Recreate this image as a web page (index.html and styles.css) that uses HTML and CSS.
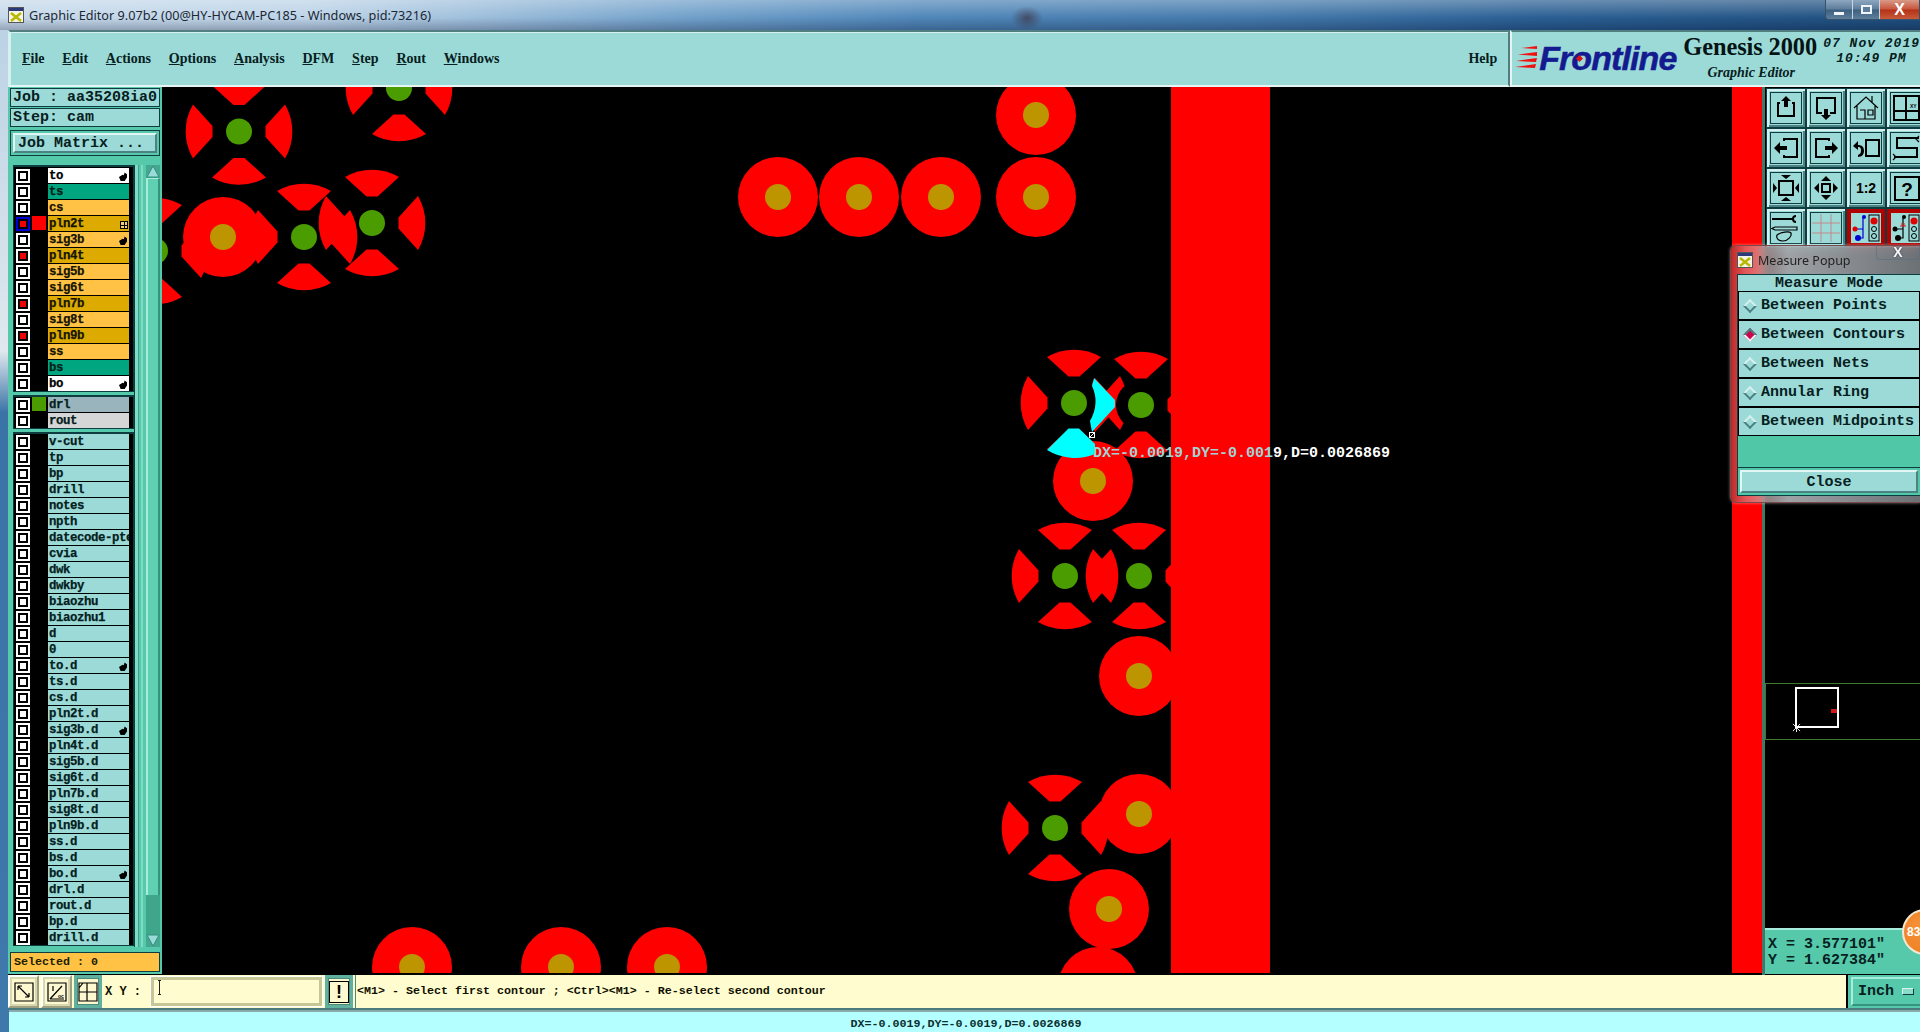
FILE: index.html
```html
<!DOCTYPE html>
<html lang="en">
<head>
<meta charset="utf-8">
<title>Graphic Editor</title>
<link rel="stylesheet" href="styles.css">
</head>
<body>
<div class="app">
  <header class="titlebar">
    <svg class="appicon" viewBox="0 0 16 16"><rect x=".5" y=".5" width="15" height="15" fill="#f4f4e8" stroke="#555"/><rect x="1" y="1" width="14" height="3" fill="#2a3a7a"/><path d="M3 6l10 8M13 6L3 14" stroke="#b8b800" stroke-width="2.4"/></svg>
    <span class="titletext">Graphic Editor 9.07b2 (00@HY-HYCAM-PC185 - Windows, pid:73216)</span>
    <div class="winbtns">
      <span class="wb wb-min"><i></i></span>
      <span class="wb wb-max"><i></i></span>
      <span class="wb wb-close">X</span>
    </div>
  </header>

  <div class="menurow">
    <nav class="menubar">
      <span class="mi"><u>F</u>ile</span>
      <span class="mi"><u>E</u>dit</span>
      <span class="mi"><u>A</u>ctions</span>
      <span class="mi"><u>O</u>ptions</span>
      <span class="mi"><u>A</u>nalysis</span>
      <span class="mi"><u>D</u>FM</span>
      <span class="mi"><u>S</u>tep</span>
      <span class="mi"><u>R</u>out</span>
      <span class="mi"><u>W</u>indows</span>
      <span class="mi mi-help">Help</span>
    </nav>
    <div class="brand">
      <div class="logo">
        <svg class="speed" viewBox="0 0 22 24"><path d="M22 1L6 3l16 1zM22 7L3 9.500l19 1.500zM22 13L1 16l20 1zM21 19L0 22l20 1z" fill="#f01010"/></svg>
        <span class="logotext">Frontline</span>
        <i class="logodot"></i>
      </div>
      <div class="genesis">
        <span class="gname">Genesis 2000</span>
        <span class="gsub">Graphic Editor</span>
      </div>
      <div class="clock">
        <span>07 Nov 2019</span>
        <span class="clock-time">10:49 PM</span>
      </div>
    </div>
  </div>

  <main class="main">
    <aside class="left">
      <div class="infobox">Job : aa35208ia0</div>
      <div class="infobox">Step: cam</div>
      <div class="matrixwrap"><div class="matrixbtn">Job Matrix ...</div></div>
      <div class="listarea">
        <div class="lists">
          <div class="group">
            <div class="row"><i class="chk"></i><i class="sw"></i><span class="name n-white hand">to</span></div>
            <div class="row"><i class="chk"></i><i class="sw"></i><span class="name n-green">ts</span></div>
            <div class="row"><i class="chk"></i><i class="sw"></i><span class="name n-orange">cs</span></div>
            <div class="row"><i class="chk chk-work"></i><i class="sw sw-red"></i><span class="name n-gold plus">pln2t</span></div>
            <div class="row"><i class="chk"></i><i class="sw"></i><span class="name n-orange hand">sig3b</span></div>
            <div class="row"><i class="chk chk-on"></i><i class="sw"></i><span class="name n-gold">pln4t</span></div>
            <div class="row"><i class="chk"></i><i class="sw"></i><span class="name n-orange">sig5b</span></div>
            <div class="row"><i class="chk"></i><i class="sw"></i><span class="name n-orange">sig6t</span></div>
            <div class="row"><i class="chk chk-on"></i><i class="sw"></i><span class="name n-gold">pln7b</span></div>
            <div class="row"><i class="chk"></i><i class="sw"></i><span class="name n-orange">sig8t</span></div>
            <div class="row"><i class="chk chk-on"></i><i class="sw"></i><span class="name n-gold">pln9b</span></div>
            <div class="row"><i class="chk"></i><i class="sw"></i><span class="name n-orange">ss</span></div>
            <div class="row"><i class="chk"></i><i class="sw"></i><span class="name n-green">bs</span></div>
            <div class="row"><i class="chk"></i><i class="sw"></i><span class="name n-white hand">bo</span></div>
          </div>
          <div class="group">
            <div class="row"><i class="chk"></i><i class="sw sw-green"></i><span class="name n-steel">drl</span></div>
            <div class="row"><i class="chk"></i><i class="sw"></i><span class="name n-grey">rout</span></div>
          </div>
          <div class="group">
            <div class="row"><i class="chk"></i><i class="sw"></i><span class="name">v-cut</span></div>
            <div class="row"><i class="chk"></i><i class="sw"></i><span class="name">tp</span></div>
            <div class="row"><i class="chk"></i><i class="sw"></i><span class="name">bp</span></div>
            <div class="row"><i class="chk"></i><i class="sw"></i><span class="name">drill</span></div>
            <div class="row"><i class="chk"></i><i class="sw"></i><span class="name">notes</span></div>
            <div class="row"><i class="chk"></i><i class="sw"></i><span class="name">npth</span></div>
            <div class="row"><i class="chk"></i><i class="sw"></i><span class="name">datecode-pte</span></div>
            <div class="row"><i class="chk"></i><i class="sw"></i><span class="name">cvia</span></div>
            <div class="row"><i class="chk"></i><i class="sw"></i><span class="name">dwk</span></div>
            <div class="row"><i class="chk"></i><i class="sw"></i><span class="name">dwkby</span></div>
            <div class="row"><i class="chk"></i><i class="sw"></i><span class="name">biaozhu</span></div>
            <div class="row"><i class="chk"></i><i class="sw"></i><span class="name">biaozhu1</span></div>
            <div class="row"><i class="chk"></i><i class="sw"></i><span class="name">d</span></div>
            <div class="row"><i class="chk"></i><i class="sw"></i><span class="name">0</span></div>
            <div class="row"><i class="chk"></i><i class="sw"></i><span class="name hand">to.d</span></div>
            <div class="row"><i class="chk"></i><i class="sw"></i><span class="name">ts.d</span></div>
            <div class="row"><i class="chk"></i><i class="sw"></i><span class="name">cs.d</span></div>
            <div class="row"><i class="chk"></i><i class="sw"></i><span class="name">pln2t.d</span></div>
            <div class="row"><i class="chk"></i><i class="sw"></i><span class="name hand">sig3b.d</span></div>
            <div class="row"><i class="chk"></i><i class="sw"></i><span class="name">pln4t.d</span></div>
            <div class="row"><i class="chk"></i><i class="sw"></i><span class="name">sig5b.d</span></div>
            <div class="row"><i class="chk"></i><i class="sw"></i><span class="name">sig6t.d</span></div>
            <div class="row"><i class="chk"></i><i class="sw"></i><span class="name">pln7b.d</span></div>
            <div class="row"><i class="chk"></i><i class="sw"></i><span class="name">sig8t.d</span></div>
            <div class="row"><i class="chk"></i><i class="sw"></i><span class="name">pln9b.d</span></div>
            <div class="row"><i class="chk"></i><i class="sw"></i><span class="name">ss.d</span></div>
            <div class="row"><i class="chk"></i><i class="sw"></i><span class="name">bs.d</span></div>
            <div class="row"><i class="chk"></i><i class="sw"></i><span class="name hand">bo.d</span></div>
            <div class="row"><i class="chk"></i><i class="sw"></i><span class="name">drl.d</span></div>
            <div class="row"><i class="chk"></i><i class="sw"></i><span class="name">rout.d</span></div>
            <div class="row"><i class="chk"></i><i class="sw"></i><span class="name">bp.d</span></div>
            <div class="row"><i class="chk"></i><i class="sw"></i><span class="name">drill.d</span></div>
          </div>
        </div>
        <div class="stripes"></div>
        <div class="scroll">
          <svg class="arrow" viewBox="0 0 14 13"><path d="M7 1L13 12H1z" fill="#9cdada" stroke="#2f8f80"/></svg>
          <div class="thumb"></div>
          <div class="trough"></div>
          <svg class="arrow" viewBox="0 0 14 13"><path d="M7 12L13 1H1z" fill="#9cdada" stroke="#2f8f80"/></svg>
        </div>
      </div>
      <div class="selected">Selected : 0</div>
    </aside>

    <section class="canvas">
      <svg class="board" viewBox="162 87 1600 888">
        <defs>
          <path id="lobe" d="M-27-46A53.500 53.500 0 0 1 27-46L5.500-26.500H-5.500Z"/>
          <g id="thermal">
            <use href="#lobe"/>
            <use href="#lobe" transform="rotate(90)"/>
            <use href="#lobe" transform="rotate(180)"/>
            <use href="#lobe" transform="rotate(270)"/>
          </g>
        </defs>
        <g class="red">
          <use href="#thermal" x="155" y="251"/>
          <use href="#thermal" x="239" y="131.500"/>
          <use href="#thermal" x="399" y="88"/>
          <use href="#thermal" x="304" y="237"/>
          <use href="#thermal" x="372" y="223"/>
          <use href="#thermal" x="1074" y="403"/>
          <use href="#thermal" x="1141" y="405"/>
          <use href="#thermal" x="1065" y="576"/>
          <use href="#thermal" x="1139" y="576"/>
          <use href="#thermal" x="1055" y="828"/>
          <circle cx="223" cy="237" r="40"/>
          <circle cx="778" cy="197" r="40"/>
          <circle cx="859" cy="197" r="40"/>
          <circle cx="941" cy="197" r="40"/>
          <circle cx="1036" cy="197" r="40"/>
          <circle cx="1036" cy="115" r="40"/>
          <circle cx="1093" cy="481" r="40"/>
          <circle cx="1139" cy="676" r="40"/>
          <circle cx="1139" cy="814" r="40"/>
          <circle cx="1109" cy="909" r="40"/>
          <circle cx="1098" cy="987" r="40"/>
          <circle cx="412" cy="967" r="40"/>
          <circle cx="561" cy="967" r="40"/>
          <circle cx="667" cy="967" r="40"/>
          <rect x="1171" y="87" width="99" height="888"/>
          <rect x="1732" y="87" width="30" height="888"/>
        </g>
        <circle cx="1141" cy="405" r="25" fill="#000"/>
        <circle cx="1074" cy="403" r="25" fill="#000"/>
        <g class="cyan">
          <path d="M1094 378L1115 400V407L1092 432L1090 421Q1100 403 1092 386Z"/>
          <path d="M1047 450A53.500 53.500 0 0 0 1095 454V444L1079 428.500H1068.500Z"/>
        </g>
        <g class="green">
          <circle cx="155" cy="251" r="13"/>
          <circle cx="239" cy="131.500" r="13"/>
          <circle cx="399" cy="88" r="13"/>
          <circle cx="304" cy="237" r="13"/>
          <circle cx="372" cy="223" r="13"/>
          <circle cx="1074" cy="403" r="13"/>
          <circle cx="1141" cy="405" r="13"/>
          <circle cx="1065" cy="576" r="13"/>
          <circle cx="1139" cy="576" r="13"/>
          <circle cx="1055" cy="828" r="13"/>
        </g>
        <g class="gold">
          <circle cx="223" cy="237" r="13"/>
          <circle cx="778" cy="197" r="13"/>
          <circle cx="859" cy="197" r="13"/>
          <circle cx="941" cy="197" r="13"/>
          <circle cx="1036" cy="197" r="13"/>
          <circle cx="1036" cy="115" r="13"/>
          <circle cx="1093" cy="481" r="13"/>
          <circle cx="1139" cy="676" r="13"/>
          <circle cx="1139" cy="814" r="13"/>
          <circle cx="1109" cy="909" r="13"/>
          <circle cx="412" cy="967" r="13"/>
          <circle cx="561" cy="967" r="13"/>
          <circle cx="667" cy="967" r="13"/>
        </g>
        <rect x="162" y="973" width="1600" height="2" fill="#000"/>
        <rect x="1089.500" y="432.500" width="5" height="5" fill="#000" stroke="#fff"/>
        <path d="M1090 437l4-4" stroke="#fff"/>
      </svg>
      <div class="measure"><span class="m-over">DX=-0.0019,DY=-0.001</span>9,D=0.0026869</div>
    </section>

    <aside class="right">
      <div class="tools">
        <div class="tile"><svg class="ico" viewBox="0 0 30 30"><path d="M9 10H7v13h16V10h-2" class="s"/><path d="M15 3l5 5h-3v6h-4V8h-3z"/></svg></div>
        <div class="tile"><svg class="ico" viewBox="0 0 30 30"><path d="M11 20H6V5h18v15h-5" class="s"/><path d="M15 27l5-5h-3v-6h-4v6h-3z"/></svg></div>
        <div class="tile"><svg class="ico" viewBox="0 0 30 30"><path d="M3 15L15 4l12 11M6 13v13h18V13M9 17h5v9M17 17h5v5h-5zM21 9V3" class="s1"/></svg></div>
        <div class="tile"><svg class="ico" viewBox="0 0 30 30"><path d="M3 3h25v24H3zM15 3v24M3 18h25" class="s"/><text x="19" y="15" class="xy">XY</text></svg></div>
        <div class="tile"><svg class="ico" viewBox="0 0 30 30"><path d="M13 8V6h13v18H13v-2" class="s"/><path d="M3 15l6-6v4h7v4H9v4z"/></svg></div>
        <div class="tile"><svg class="ico" viewBox="0 0 30 30"><path d="M18 8V6H5v18h13v-2" class="s"/><path d="M27 15l-6-6v4h-7v4h7v4z"/></svg></div>
        <div class="tile"><svg class="ico" viewBox="0 0 30 30"><path d="M15 7h13v16H15z" class="s"/><path d="M7 8L2 13l5 4v-3c3 0 3 2 3 4s-1 3-3 4v2c4 0 6-3 6-6 0-4-2-6-6-6z"/></svg></div>
        <div class="tile"><svg class="ico" viewBox="0 0 30 30"><path d="M28 5H6v10h20v9H3" class="s"/><path d="M28 3l-3 3 3 3M2 21l3 3-3 3" class="s1"/></svg></div>
        <div class="tile"><svg class="ico" viewBox="0 0 30 30"><path d="M8 8h14v14H8z" class="s"/><path d="M15 6l-5-4h10zM15 24l-5 4h10zM6 15l-4-5v10zM24 15l4-5v10z"/></svg></div>
        <div class="tile"><svg class="ico" viewBox="0 0 30 30"><path d="M11 11h8v8h-8z" class="s"/><path d="M15 3l5 5H10zM15 27l5-5H10zM3 15l5-5v10zM27 15l-5-5v10z"/></svg></div>
        <div class="tile"><span class="ratio">1:2</span></div>
        <div class="tile"><svg class="ico" viewBox="0 0 30 30"><path d="M4 4h24v23H4z" class="s"/><text x="16" y="23" class="qm">?</text></svg></div>
        <div class="tile"><svg class="ico" viewBox="0 0 30 30"><path d="M1 6h21M25 3a3 3 0 1 0 0 6" class="s"/><path d="M4 14h22v3H4L1 15.500zM6 22c4-3 12-4 14-2 1 3-3 8-8 8-5 0-7-3-6-6z" class="s1"/></svg></div>
        <div class="tile"><svg class="ico" viewBox="0 0 30 30"><path d="M1 10h28M1 20h28M10 1v28M20 1v28" class="gridline"/></svg></div>
        <div class="tile tile-red"><svg class="ico" viewBox="0 0 30 30"><path d="M4 16h8M12 16V5M12 16v9H6" class="blue"/><circle cx="4" cy="16" r="2.500" fill="#e00000"/><circle cx="13" cy="4" r="2" fill="#0000d0"/><circle cx="7" cy="25" r="3" fill="#0000d0"/><rect x="18" y="2" width="10" height="26" class="traffic"/><circle cx="23" cy="8" r="3.500" fill="#e00000"/><circle cx="23" cy="16" r="2.500" class="lamp"/><circle cx="23" cy="23" r="2.500" class="lamp"/></svg></div>
        <div class="tile tile-red"><svg class="ico" viewBox="0 0 30 30"><path d="M4 16h8M12 16V5M12 16v9H6" class="s1"/><path d="M9 13h6M11 10v3M13 10v3" stroke="#d02020"/><circle cx="4" cy="16" r="2.500"/><circle cx="13" cy="4" r="2"/><circle cx="7" cy="25" r="3"/><rect x="18" y="2" width="10" height="26" class="traffic"/><circle cx="23" cy="8" r="3.500" fill="#e00000"/><circle cx="23" cy="16" r="2.500" class="lamp"/><circle cx="23" cy="23" r="2.500" class="lamp"/></svg></div>
      </div>
      <div class="overview">
        <div class="ovbox"><i class="ovmark"></i><svg class="ovstar" viewBox="0 0 10 10"><path d="M1 1l8 8M9 1L1 9M5 0v10" stroke="#fff"/></svg></div>
      </div>
      <div class="coords">
        <div>X = 3.577101"</div>
        <div>Y = 1.627384"</div>
      </div>
    </aside>
  </main>

  <div class="cmdbar">
    <div class="cbtn"><svg class="cico" viewBox="0 0 20 20"><path d="M1 1h18v18H1z" class="s1"/><path d="M4 4l11 11M4 4h4M4 4v4M15 15h-4M15 15v-4" class="s1"/></svg></div>
    <div class="cbtn"><svg class="cico" viewBox="0 0 20 20"><path d="M1 1h18v18H1z" class="s1"/><path d="M3 17h14M3 17L15 4M6 4v5" class="s1"/><text x="11" y="16" class="deg">oc</text></svg></div>
    <div class="cbtn cbtn-teal"><svg class="cico" viewBox="0 0 20 20"><path d="M1 1h18v18H1zM9 1v18M1 10h18M1 6l4-5" class="s1"/></svg></div>
    <div class="xylabel">X Y :</div>
    <div class="xyinput"><span class="ibeam"></span></div>
    <div class="cbtn cbtn-teal cbtn-bang"><span class="bang">!</span></div>
    <div class="message">&lt;M1&gt; - Select first contour ; &lt;Ctrl&gt;&lt;M1&gt; - Re-select second contour</div>
    <div class="unit"><div class="unitbtn">Inch<i class="unitmark"></i></div></div>
  </div>
  <footer class="status"><span>DX=-0.0019,DY=-0.0019,D=0.0026869</span></footer>
</div>

<div class="popup">
  <div class="poptitle">
    <svg class="appicon" viewBox="0 0 16 16"><rect x=".5" y=".5" width="15" height="15" fill="#f4f4e8" stroke="#555"/><rect x="1" y="1" width="14" height="3" fill="#2a3a7a"/><path d="M3 6l10 8M13 6L3 14" stroke="#b8b800" stroke-width="2.400"/></svg>
    <span>Measure Popup</span>
    <b class="popx">X</b>
  </div>
  <div class="popbody">
    <div class="pophead">Measure Mode</div>
    <div class="poprow"><i class="radio"></i>Between Points</div>
    <div class="poprow"><i class="radio radio-on"></i>Between Contours</div>
    <div class="poprow"><i class="radio"></i>Between Nets</div>
    <div class="poprow"><i class="radio"></i>Annular Ring</div>
    <div class="poprow"><i class="radio"></i>Between Midpoints</div>
    <div class="popfill"></div>
    <div class="closewrap"><div class="closebtn">Close</div></div>
  </div>
</div>

<div class="badge"><span>83</span></div>
</body>
</html>
```
FILE: styles.css
```css
* { box-sizing: border-box; }
html, body { margin: 0; padding: 0; }
body {
  width: 1920px;
  height: 1032px;
  overflow: hidden;
  position: relative;
  background: #000;
  font-family: "Liberation Mono", monospace;
}
i { display: block; }
.app {
  width: 1920px;
  height: 1032px;
  padding-left: 8px;
  display: flex;
  flex-direction: column;
  background: linear-gradient(180deg, #b8d0e4 0, #dfe8ee 34%, #3a73a6 40%, #3f78ab 100%);
  position: relative;
}

/* title bar */
.titlebar {
  height: 30px;
  margin-left: -8px;
  padding-left: 8px;
  display: flex;
  align-items: center;
  gap: 5px;
  flex: none;
  background:
    radial-gradient(ellipse 16px 12px at 1027px 18px, rgba(60,40,50,.6), rgba(60,40,50,0)),
    linear-gradient(180deg, rgba(255,255,255,.3) 0, rgba(255,255,255,0) 60%, rgba(0,0,30,.25) 100%),
    linear-gradient(90deg, #c6d9ea 0, #bcd3e7 16%, #a0c0dc 24%, #6f9fc9 36%, #4f86b8 48%, #4379ab 65%, #2a5f93 80%, #1f4e7d 100%);
}
.appicon { width: 16px; height: 16px; flex: none; }
.titletext {
  font: 12.700px "Noto Sans", sans-serif;
  color: #1c2733;
  white-space: nowrap;
}
.winbtns {
  margin-left: auto;
  align-self: flex-start;
  display: flex;
  height: 20px;
  width: 95px;
  border: 1px solid #37516b;
  border-top: 0;
  border-radius: 0 0 0 4px;
  overflow: hidden;
}
.wb {
  flex: 27 0 0;
  display: flex;
  align-items: center;
  justify-content: center;
  background: linear-gradient(180deg, #8ea7c0 0, #5d7d9c 48%, #3d607f 52%, #5e7f9c 100%);
  border-right: 1px solid #c8d6e2;
}
.wb-close {
  flex: 40 0 0;
  border: 0;
  background: linear-gradient(180deg, #d89a88 0, #c9553c 48%, #b33218 52%, #c85a3a 100%);
  color: #fff;
  font: bold 16px "Liberation Sans", sans-serif;
}
.wb-min i { width: 10px; height: 3px; margin-top: 7px; background: #f0f4f8; }
.wb-max i { width: 11px; height: 9px; border: 2px solid #f0f4f8; background: #5d7d9c; }

/* menu */
.menurow {
  height: 57px;
  flex: none;
  display: flex;
  background: #9cdad8;
}
.menubar {
  width: 1507px;
  display: flex;
  align-items: center;
  gap: 17.800px;
  padding-left: 12px;
  background: #9cdad8;
  border-top: 2px solid #517f80;
  border-left: 2px solid #d6f0ef;
  border-bottom: 2px solid #e6f5f4;
  border-right: 2px solid #517f80;
  box-shadow: inset 1px 1px 0 #d6f0ef;
}
.mi {
  font: bold 14px "Liberation Serif", serif;
  color: #062020;
  white-space: nowrap;
}
.mi-help { margin-left: auto; margin-right: 11px; }
.brand {
  flex: 1;
  display: flex;
  align-items: stretch;
  position: relative;
  border-top: 2px solid #517f80;
  border-left: 2px solid #e6f5f4;
  border-bottom: 2px solid #e6f5f4;
  padding-left: 3px;
}
.logo {
  width: 164px;
  display: flex;
  align-items: center;
  position: relative;
  padding-bottom: 4px;
}
.speed { width: 22px; height: 24px; flex: none; margin-top: 1px; }
.logotext {
  font: italic bold 34px "Liberation Sans", sans-serif;
  color: #141a90;
  letter-spacing: -.9px;
  line-height: 1;
  margin-top: 2px;
  margin-left: 2px;
  -webkit-text-stroke: .5px #141a90;
}
.logodot {
  position: absolute;
  left: 62px;
  top: 24px;
  width: 5px;
  height: 5px;
  background: #e01010;
  transform: rotate(45deg);
}
.genesis {
  width: 144px;
  display: flex;
  flex-direction: column;
  align-items: center;
  margin-left: -1px;
}
.gname {
  font: bold 24.400px "Liberation Serif", serif;
  color: #041414;
  line-height: 30px;
  white-space: nowrap;
  letter-spacing: -.1px;
}
.gsub {
  font: italic bold 14px "Liberation Serif", serif;
  color: #062020;
  line-height: 16px;
  margin-top: 3px;
  margin-left: 2px;
  white-space: nowrap;
}
.clock {
  display: flex;
  flex-direction: column;
  font: italic bold 13px "Liberation Mono", monospace;
  color: #062020;
  white-space: nowrap;
  padding-top: 4px;
  padding-left: 1px;
  letter-spacing: 1px;
  line-height: 15px;
}
.clock-time { margin-left: 13px; }

/* main */
.main {
  height: 888px;
  flex: none;
  display: flex;
  background: #000;
}

/* left */
.left {
  width: 154px;
  flex: none;
  background: #55c9aa;
  padding: 1px 2px 0;
  display: flex;
  flex-direction: column;
  position: relative;
  height: 887px;
}
.infobox {
  height: 19px;
  margin-bottom: 1px;
  background: #9cdad8;
  border: 1px solid #0d3d40;
  padding-left: 2px;
  font: bold 15px/18px "Liberation Mono", monospace;
  color: #062020;
  white-space: nowrap;
  overflow: hidden;
}
.matrixwrap {
  height: 26px;
  margin-top: 2px;
  border: 1px solid #0d3d40;
  padding: 2px;
  background: #55c9aa;
}
.matrixbtn {
  height: 20px;
  background: #9cdad8;
  border: 2px solid;
  border-color: #e2f6f5 #4b8384 #4b8384 #e2f6f5;
  padding-left: 3px;
  font: bold 15px/18px "Liberation Mono", monospace;
  color: #062020;
  white-space: nowrap;
}
.listarea {
  display: flex;
  margin-top: 9px;
  margin-left: 3px;
  height: 782px;
}
.lists {
  width: 121px;
  flex: none;
  display: flex;
  flex-direction: column;
  gap: 3px;
}
.group {
  background: #000;
  padding-top: 2px;
  border-top: 1px solid #0d3d40;
  box-shadow: inset 0 0 0 1px #0d3d40;
}
.group + .group { padding-top: 1px; }
.row {
  height: 16px;
  display: flex;
  padding-left: 3px;
}
.chk {
  width: 14px;
  height: 14px;
  margin-top: 1px;
  flex: none;
  background: #fff;
  border: 2px solid #fff;
  box-shadow: inset 0 0 0 2px #000;
}
.chk-on { background: #f00000; }
.chk-work { background: #f00000; border-color: #0000d8; }
.sw {
  width: 14px;
  height: 14px;
  margin: 0 2px;
  flex: none;
}
.sw-red { background: #ff0000; }
.sw-green { background: #4a9c00; }
.name {
  width: 81px;
  height: 15px;
  position: relative;
  flex: none;
  background: #9cdad8;
  color: #041e1e;
  font: bold 12.400px/16px "Liberation Mono", monospace;
  letter-spacing: -.44px;
  -webkit-text-stroke: .25px currentColor;
  padding-left: 1px;
  white-space: nowrap;
  overflow: hidden;
}
.n-white { background: #fff; color: #000; }
.n-green { background: #00a680; color: #011f1a; }
.n-orange { background: #ffc244; color: #141400; }
.n-gold { background: #dcaa00; color: #141400; }
.n-steel { background: #9ab4be; color: #041e1e; }
.n-grey { background: #d6d6d6; color: #041e1e; }
.hand::after {
  content: "";
  position: absolute;
  right: 2px;
  top: 4px;
  width: 8px;
  height: 9px;
  background: #000;
  clip-path: polygon(0 55%, 30% 40%, 45% 30%, 60% 35%, 70% 5%, 100% 25%, 100% 60%, 70% 100%, 20% 100%);
}
.plus::after {
  content: "";
  position: absolute;
  right: 1px;
  top: 5px;
  width: 6px;
  height: 6px;
  border: 1px solid #000;
  background: linear-gradient(#000, #000) center/100% 1px no-repeat, linear-gradient(#000, #000) center/1px 100% no-repeat, #f0d070;
}
.stripes {
  width: 12px;
  flex: none;
  background: linear-gradient(90deg, #0d3d40 0 1px, #7fdcc4 1px 4px, #3f9f88 4px 5px, #55c9aa 5px 7px, #7fdcc4 7px 9px, #55c9aa 9px 12px);
}
.scroll {
  width: 14px;
  flex: none;
  display: flex;
  flex-direction: column;
  background: #45a88e;
}
.arrow { width: 14px; height: 13px; flex: none; }
.thumb {
  height: 717px;
  flex: none;
  background: #5fd0b2;
  border-left: 2px solid #a8ecdc;
  border-right: 2px solid #37937e;
  border-top: 1px solid #a8ecdc;
}
.trough { flex: 1; background: #3fa68c; }
.selected {
  margin-top: 5px;
  height: 20px;
  background: #ffc244;
  border: 1px solid #0d3d40;
  padding-left: 3px;
  font: bold 11.670px/18px "Liberation Mono", monospace;
  color: #202000;
}

/* canvas */
.canvas {
  width: 1600px;
  flex: none;
  position: relative;
  background: #000;
}
.board { display: block; width: 1600px; height: 888px; }
.red { fill: #ff0000; }
.cyan { fill: #00ffff; }
.green { fill: #4a9c00; }
.gold { fill: #bc9500; }
.measure {
  position: absolute;
  left: 931px;
  top: 358px;
  font: bold 15px/18px "Liberation Mono", monospace;
  color: #fff;
  white-space: nowrap;
}
.m-over { color: #9fd4d4; }

/* right */
.right {
  flex: 1;
  display: flex;
  flex-direction: column;
  background: #000;
  border-left: 3px solid #44776c;
  position: relative;
}
.tools {
  display: grid;
  grid-template-columns: repeat(4, 40px);
  grid-auto-rows: 40px;
  padding: 1px 0 0 1px;
  flex: none;
}
.tile {
  background: #9cdad8;
  border: 1px solid #0d3d40;
  box-shadow: inset 1px 1px 0 1px #d6f0ef, inset -1px -1px 0 1px #4b8384;
  display: flex;
  align-items: center;
  justify-content: center;
}
.tile-red { background: #b00000; box-shadow: none; }
.ico {
  width: 30px;
  height: 30px;
  background: #9cdad8;
  outline: 1px solid #0d3d40;
  display: block;
}
.tile-red .ico { outline: 0; }
.s { fill: none; stroke: #000; stroke-width: 2; }
.s1 { fill: none; stroke: #000; stroke-width: 1.200; }
.blue { fill: none; stroke: #0000d0; stroke-width: 1.200; }
.traffic { fill: #9cdad8; stroke: #000; }
.lamp { fill: #9cdad8; stroke: #000; }
.gridline { stroke: #c08a8a; stroke-width: 1; fill: none; }
.xy { font: bold 5px "Liberation Sans", sans-serif; }
.qm { font: bold 19px "Liberation Sans", sans-serif; text-anchor: middle; }
.deg { font: bold 5px "Liberation Sans", sans-serif; }
.ratio {
  width: 30px;
  height: 30px;
  outline: 1px solid #0d3d40;
  font: bold 14px/30px "Liberation Sans", sans-serif;
  color: #000;
  text-align: center;
}
.overview {
  margin-top: auto;
  margin-bottom: 188px;
  height: 57px;
  border-top: 1px solid #3f7a2a;
  border-bottom: 1px solid #3f7a2a;
  border-left: 1px solid #3f7a2a;
  padding: 3px 0 0 29px;
}
.ovbox {
  width: 44px;
  height: 41px;
  border: 2px solid #fff;
  position: relative;
}
.ovmark {
  position: absolute;
  right: 0;
  top: 20px;
  width: 6px;
  height: 4px;
  background: #d01818;
}
.ovstar {
  position: absolute;
  left: -5px;
  bottom: -6px;
  width: 9px;
  height: 9px;
}
.coords {
  height: 46px;
  flex: none;
  background: #55c9aa;
  border-top: 2px solid #a8ecdc;
  margin-bottom: 1px;
  padding: 7px 0 0 3px;
  font: bold 15px/15.500px "Liberation Mono", monospace;
  color: #062020;
  white-space: nowrap;
}

/* command bar */
.cmdbar {
  height: 33px;
  flex: none;
  display: flex;
  background: #fffdd0;
}
.cbtn {
  width: 31px;
  flex: none;
  margin-right: 2px;
  background: #fdf8cf;
  border: 2px solid;
  border-color: #fff #a0a080 #a0a080 #fff;
  box-shadow: inset 0 0 0 2px #d8d8b0;
  display: flex;
  align-items: center;
  justify-content: center;
}
.cbtn-teal {
  width: 28px;
  border: 3px solid #5fb09f;
  box-shadow: inset 0 0 0 1px #4a8a7a;
}
.cico { width: 20px; height: 20px; }
.xylabel {
  width: 47px;
  flex: none;
  padding-left: 1px;
  font: bold 12px/34px "Liberation Mono", monospace;
  color: #101000;
  white-space: nowrap;
}
.xyinput {
  width: 171px;
  flex: none;
  margin: 2px 2px 2px 0;
  border: 3px solid #c6c696;
  outline: 1px solid #fff;
  background: #fffdd0;
  position: relative;
}
.ibeam {
  position: absolute;
  left: 4px;
  top: 0;
  width: 3px;
  height: 15px;
  border: solid #222;
  border-width: 1px 0;
  background: linear-gradient(#222, #222) center/1px 100% no-repeat;
}
.cbtn-bang { width: 28px; margin-left: 1px; margin-right: 2px; }
.bang {
  width: 20px;
  height: 22px;
  border: 1px solid #000;
  font: bold 18px/20px "Liberation Sans", sans-serif;
  text-align: center;
  color: #000;
}
.message {
  width: 1493px;
  flex: none;
  border-left: 1px solid #4a8a7a;
  border-right: 2px solid #000;
  padding-left: 1px;
  font: bold 11.670px/33px "Liberation Mono", monospace;
  color: #101000;
  white-space: nowrap;
}
.unit {
  flex: 1;
  background: #55c9aa;
  padding: 2px 0 2px 1px;
}
.unitbtn {
  height: 29px;
  margin-left: 2px;
  background: #55c9aa;
  border-top: 2px solid #a8ecdc;
  border-left: 2px solid #a8ecdc;
  border-bottom: 2px solid #37937e;
  padding-left: 5px;
  display: flex;
  align-items: center;
  font: bold 15px/20px "Liberation Mono", monospace;
  color: #062020;
}
.unitmark {
  width: 12px;
  height: 7px;
  margin-left: 8px;
  background: #8adcc8;
  border: 1px solid;
  border-color: #d6f6ee #0d3d40 #0d3d40 #d6f6ee;
}
.status {
  height: 24px;
  flex: none;
  background: #b4ffff;
  border-top: 2px solid #4b7b7c;
  box-shadow: inset 0 2px 0 #8aa;
  padding: 6px 0 0 3px;
  text-align: center;
  font: bold 11.670px/16px "Liberation Mono", monospace;
  color: #0a3030;
  margin-left: 1px;
  width: 1911px;
}

/* popup window */
.popup {
  position: absolute;
  left: 1730px;
  top: 245px;
  width: 190px;
  height: 258px;
  padding: 0 0 7px 6px;
  border: 1px solid #7a4a4a;
  border-right: 0;
  border-radius: 6px 0 0 6px;
  background: linear-gradient(90deg, rgba(190,50,50,.8) 0, rgba(205,150,150,.6) 8%, rgba(225,230,235,.7) 30%, rgba(215,225,235,.5) 100%);
  backdrop-filter: blur(4px);
  box-shadow: 0 0 3px rgba(255,255,255,.5);
}
.poptitle {
  height: 28px;
  display: flex;
  align-items: center;
  gap: 5px;
  font: 12.500px "Noto Sans", sans-serif;
  color: #222;
  position: relative;
}
.popx {
  position: absolute;
  right: 0;
  top: -1px;
  width: 44px;
  height: 15px;
  text-align: center;
  border: 1px solid rgba(90,110,130,.6);
  border-top: 0;
  border-radius: 0 0 4px 4px;
  font: bold 14px/15px "Liberation Sans", sans-serif;
  color: #f4f8fa;
  text-shadow: 0 0 2px #334;
}
.popbody {
  display: flex;
  flex-direction: column;
  height: 222px;
  background: #50c8a8;
  border: 1px solid #0d3d40;
  border-right: 0;
}
.pophead {
  height: 16px;
  flex: none;
  background: #9cdad8;
  text-align: center;
  font: bold 15px/17px "Liberation Mono", monospace;
  color: #062020;
}
.poprow {
  height: 29px;
  flex: none;
  display: flex;
  align-items: center;
  background: #9cdad8;
  border: 1px solid #000;
  box-shadow: 0 1px 0 #000;
  padding-left: 6px;
  gap: 6px;
  font: bold 15px/20px "Liberation Mono", monospace;
  color: #062020;
  white-space: nowrap;
}
.radio {
  width: 10px;
  height: 10px;
  flex: none;
  background: #9cdad8;
  border: 2px solid;
  border-color: #d6f0ef #4a8080 #4a8080 #d6f0ef;
  transform: rotate(45deg);
}
.radio-on {
  background: #d0004a;
  border-color: #4a8080 #e6f5f4 #e6f5f4 #4a8080;
}
.popfill { flex: 1; background: #50c8a8; }
.closewrap {
  height: 28px;
  flex: none;
  border-top: 1px solid #0d3d40;
  padding: 2px;
  background: #50c8a8;
}
.closebtn {
  height: 23px;
  background: #9cdad8;
  border: 2px solid;
  border-color: #e2f6f5 #4b8384 #4b8384 #e2f6f5;
  text-align: center;
  font: bold 15px/21px "Liberation Mono", monospace;
  color: #062020;
}

/* floating badge */
.badge {
  position: absolute;
  left: 1902px;
  top: 909px;
  width: 46px;
  height: 46px;
  border-radius: 50%;
  background: radial-gradient(circle at 40% 40%, #f6923a, #ec7a1a);
  border: 2px solid #f4e6d2;
  color: #fff;
  font: bold 12px/42px "Liberation Sans", sans-serif;
  padding-left: 3px;
}
```
